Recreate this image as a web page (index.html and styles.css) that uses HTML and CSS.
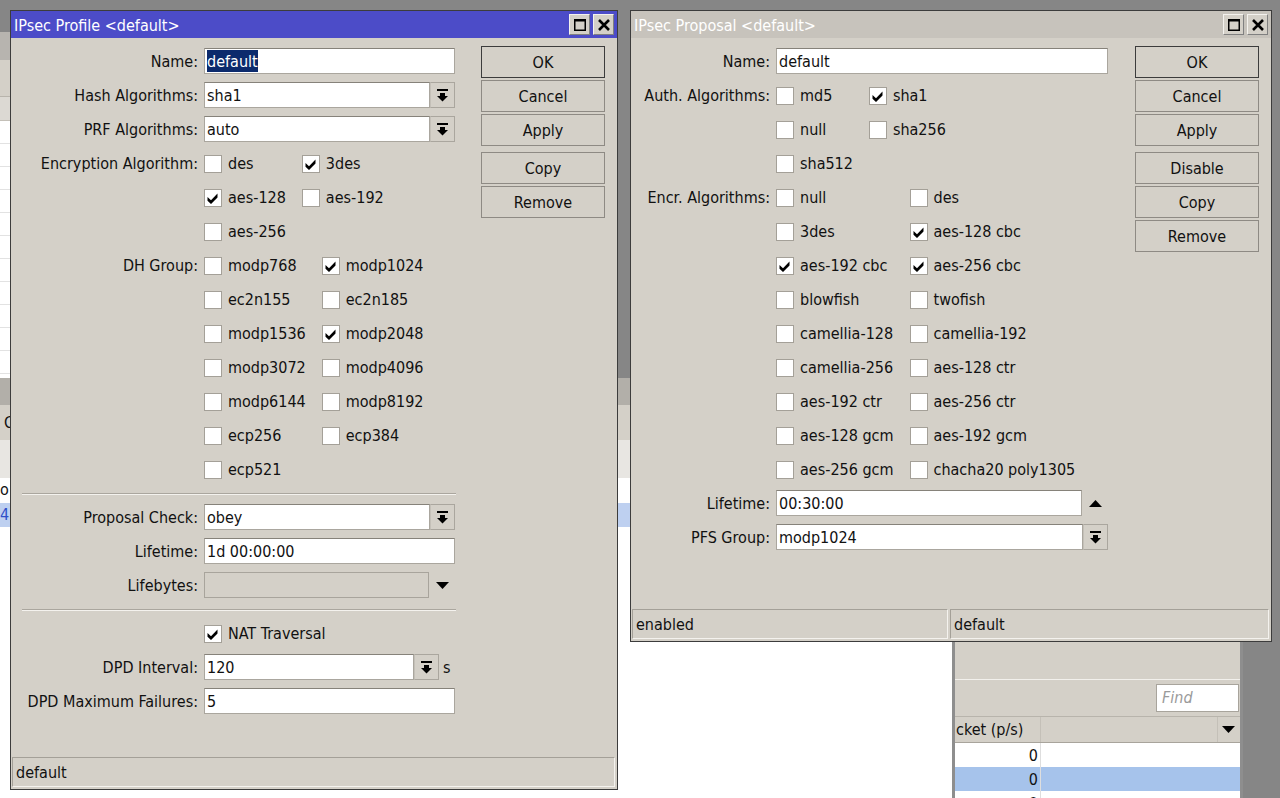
FILE: index.html
```html
<!DOCTYPE html>
<html lang="en">
<head>
  <meta charset="UTF-8">
  <meta name="viewport" content="width=device-width, initial-scale=1.0">
  <title>IPsec Profile / Proposal</title>
  <link rel="stylesheet" href="styles.css">
</head>
<body>
  <svg class="defs" width="0" height="0" aria-hidden="true">
    <symbol id="tick" viewBox="0 0 16 16">
      <path d="M2.5 7 L6 10.2 L12.5 3.5 L12.5 7.6 L6 14 L2.5 10.8 Z"/>
    </symbol>
    <symbol id="drop" viewBox="0 0 11 13">
      <rect x="0" y="0" width="11" height="2"/>
      <rect x="3" y="4" width="5" height="3"/>
      <polygon points="0,7 11,7 5.5,12.5"/>
    </symbol>
    <symbol id="down" viewBox="0 0 13 7">
      <polygon points="0,0 13,0 6.5,7"/>
    </symbol>
    <symbol id="up" viewBox="0 0 13 7">
      <polygon points="0,7 13,7 6.5,0"/>
    </symbol>
    <symbol id="max" viewBox="0 0 14 14">
      <path d="M1 1 H13 V13 H1 Z M2.5 3.5 V11.5 H11.5 V3.5 Z" fill-rule="evenodd"/>
    </symbol>
    <symbol id="close" viewBox="0 0 14 14">
      <path d="M2 2 L12 12 M12 2 L2 12" stroke="#000" stroke-width="2.6" fill="none"/>
    </symbol>
  </svg>

  <div class="desktop">
    <!-- windows behind the dialogs -->
    <div class="bg-win bg-win-a">
      <div class="bg-title"></div>
      <div class="bg-tools"></div>
      <div class="bg-head"></div>
      <div class="bg-rows"></div>
    </div>

    <div class="bg-win bg-win-b">
      <div class="bg-title"></div>
      <div class="bg-tools"><span class="cut-text">C</span></div>
      <div class="bg-head"></div>
      <div class="bg-row"><span class="cut-text">o</span></div>
      <div class="bg-row selected"><span class="cut-text">4</span></div>
    </div>

    <div class="bg-win bg-win-c">
      <div class="c-top"></div>
      <div class="c-tools">
        <div class="find">Find</div>
      </div>
      <div class="c-head">
        <div class="c-cell c-col1">cket (p/s)</div>
        <div class="c-cell c-col2"></div>
        <div class="c-cell c-menu"><svg class="tri"><use href="#down"/></svg></div>
      </div>
      <div class="c-row"><div class="c-cell c-col1 num">0</div><div class="c-cell c-col2"></div></div>
      <div class="c-row selected"><div class="c-cell c-col1 num">0</div><div class="c-cell c-col2"></div></div>
      <div class="c-row"><div class="c-cell c-col1 num">0</div><div class="c-cell c-col2"></div></div>
    </div>

    <!-- IPsec Profile -->
    <div class="window win-profile">
      <div class="titlebar">
        <div class="title">IPsec Profile &lt;default&gt;</div>
        <div class="title-btn"><svg class="ico-max"><use href="#max"/></svg></div>
        <div class="title-btn"><svg class="ico-close"><use href="#close"/></svg></div>
      </div>

      <div class="win-body">
        <div class="form">
          <div class="row">
            <div class="label">Name:</div>
            <div class="field"><div class="input"><span class="sel">default</span></div></div>
          </div>
          <div class="row">
            <div class="label">Hash Algorithms:</div>
            <div class="field combo">
              <div class="input">sha1</div>
              <div class="drop-btn"><svg class="ico-drop"><use href="#drop"/></svg></div>
            </div>
          </div>
          <div class="row">
            <div class="label">PRF Algorithms:</div>
            <div class="field combo">
              <div class="input">auto</div>
              <div class="drop-btn"><svg class="ico-drop"><use href="#drop"/></svg></div>
            </div>
          </div>
          <div class="row">
            <div class="label">Encryption Algorithm:</div>
            <div class="checks">
              <div class="check"><span class="box"></span>des</div>
              <div class="check"><span class="box"><svg class="tick"><use href="#tick"/></svg></span>3des</div>
              <div class="check"><span class="box"><svg class="tick"><use href="#tick"/></svg></span>aes-128</div>
              <div class="check"><span class="box"></span>aes-192</div>
              <div class="check"><span class="box"></span>aes-256</div>
            </div>
          </div>
          <div class="row">
            <div class="label">DH Group:</div>
            <div class="checks">
              <div class="check"><span class="box"></span>modp768</div>
              <div class="check"><span class="box"><svg class="tick"><use href="#tick"/></svg></span>modp1024</div>
              <div class="check"><span class="box"></span>ec2n155</div>
              <div class="check"><span class="box"></span>ec2n185</div>
              <div class="check"><span class="box"></span>modp1536</div>
              <div class="check"><span class="box"><svg class="tick"><use href="#tick"/></svg></span>modp2048</div>
              <div class="check"><span class="box"></span>modp3072</div>
              <div class="check"><span class="box"></span>modp4096</div>
              <div class="check"><span class="box"></span>modp6144</div>
              <div class="check"><span class="box"></span>modp8192</div>
              <div class="check"><span class="box"></span>ecp256</div>
              <div class="check"><span class="box"></span>ecp384</div>
              <div class="check"><span class="box"></span>ecp521</div>
            </div>
          </div>

          <div class="sep"></div>

          <div class="row">
            <div class="label">Proposal Check:</div>
            <div class="field combo">
              <div class="input">obey</div>
              <div class="drop-btn"><svg class="ico-drop"><use href="#drop"/></svg></div>
            </div>
          </div>
          <div class="row">
            <div class="label">Lifetime:</div>
            <div class="field"><div class="input">1d 00:00:00</div></div>
          </div>
          <div class="row">
            <div class="label">Lifebytes:</div>
            <div class="field combo">
              <div class="input disabled"></div>
              <div class="arrow"><svg class="tri"><use href="#down"/></svg></div>
            </div>
          </div>

          <div class="sep"></div>

          <div class="row">
            <div class="label"></div>
            <div class="check"><span class="box"><svg class="tick"><use href="#tick"/></svg></span>NAT Traversal</div>
          </div>
          <div class="row">
            <div class="label">DPD Interval:</div>
            <div class="field combo">
              <div class="input">120</div>
              <div class="drop-btn"><svg class="ico-drop"><use href="#drop"/></svg></div>
              <div class="unit">s</div>
            </div>
          </div>
          <div class="row">
            <div class="label">DPD Maximum Failures:</div>
            <div class="field"><div class="input">5</div></div>
          </div>
        </div>

        <div class="buttons">
          <button class="btn btn-default">OK</button>
          <button class="btn">Cancel</button>
          <button class="btn">Apply</button>
          <button class="btn btn-gap">Copy</button>
          <button class="btn">Remove</button>
        </div>
      </div>

      <div class="statusbar">
        <div class="status-cell">default</div>
      </div>
    </div>

    <!-- IPsec Proposal -->
    <div class="window win-proposal">
      <div class="titlebar inactive">
        <div class="title">IPsec Proposal &lt;default&gt;</div>
        <div class="title-btn"><svg class="ico-max"><use href="#max"/></svg></div>
        <div class="title-btn"><svg class="ico-close"><use href="#close"/></svg></div>
      </div>

      <div class="win-body">
        <div class="form">
          <div class="row">
            <div class="label">Name:</div>
            <div class="field"><div class="input">default</div></div>
          </div>
          <div class="row">
            <div class="label">Auth. Algorithms:</div>
            <div class="checks">
              <div class="check"><span class="box"></span>md5</div>
              <div class="check"><span class="box"><svg class="tick"><use href="#tick"/></svg></span>sha1</div>
              <div class="check"><span class="box"></span>null</div>
              <div class="check"><span class="box"></span>sha256</div>
              <div class="check"><span class="box"></span>sha512</div>
            </div>
          </div>
          <div class="row">
            <div class="label">Encr. Algorithms:</div>
            <div class="checks">
              <div class="check"><span class="box"></span>null</div>
              <div class="check"><span class="box"></span>des</div>
              <div class="check"><span class="box"></span>3des</div>
              <div class="check"><span class="box"><svg class="tick"><use href="#tick"/></svg></span>aes-128 cbc</div>
              <div class="check"><span class="box"><svg class="tick"><use href="#tick"/></svg></span>aes-192 cbc</div>
              <div class="check"><span class="box"><svg class="tick"><use href="#tick"/></svg></span>aes-256 cbc</div>
              <div class="check"><span class="box"></span>blowfish</div>
              <div class="check"><span class="box"></span>twofish</div>
              <div class="check"><span class="box"></span>camellia-128</div>
              <div class="check"><span class="box"></span>camellia-192</div>
              <div class="check"><span class="box"></span>camellia-256</div>
              <div class="check"><span class="box"></span>aes-128 ctr</div>
              <div class="check"><span class="box"></span>aes-192 ctr</div>
              <div class="check"><span class="box"></span>aes-256 ctr</div>
              <div class="check"><span class="box"></span>aes-128 gcm</div>
              <div class="check"><span class="box"></span>aes-192 gcm</div>
              <div class="check"><span class="box"></span>aes-256 gcm</div>
              <div class="check"><span class="box"></span>chacha20 poly1305</div>
            </div>
          </div>
          <div class="row">
            <div class="label">Lifetime:</div>
            <div class="field combo">
              <div class="input">00:30:00</div>
              <div class="arrow"><svg class="tri"><use href="#up"/></svg></div>
            </div>
          </div>
          <div class="row">
            <div class="label">PFS Group:</div>
            <div class="field combo">
              <div class="input">modp1024</div>
              <div class="drop-btn"><svg class="ico-drop"><use href="#drop"/></svg></div>
            </div>
          </div>
        </div>

        <div class="buttons">
          <button class="btn btn-default">OK</button>
          <button class="btn">Cancel</button>
          <button class="btn">Apply</button>
          <button class="btn btn-gap">Disable</button>
          <button class="btn">Copy</button>
          <button class="btn">Remove</button>
        </div>
      </div>

      <div class="statusbar">
        <div class="status-cell status-first">enabled</div>
        <div class="status-cell">default</div>
      </div>
    </div>
  </div>
</body>
</html>
```

FILE: styles.css
```css
* {
  box-sizing: border-box;
}

body {
  margin: 0;
  width: 1280px;
  height: 798px;
  overflow: hidden;
  background-color: #868686;
  font-family: "DejaVu Sans Condensed", "DejaVu Sans", sans-serif;
  font-size: 16px;
  color: #111;
}

.defs {
  position: absolute;
  width: 0;
  height: 0;
}

.desktop {
  position: relative;
  width: 1280px;
  height: 798px;
  overflow: hidden;
}

/* background windows */

.bg-win {
  position: absolute;
  display: flex;
  flex-direction: column;
  overflow: hidden;
}

.bg-win-a {
  left: 0;
  top: 32px;
  width: 300px;
  height: 346px;
  background-color: #fff;
}

.bg-win-a .bg-title {
  height: 28px;
  background-color: #b7b4af;
}

.bg-win-a .bg-tools {
  height: 37px;
  background-color: #d4d0c8;
  border-bottom: 1px solid #b8b4ac;
}

.bg-win-a .bg-head {
  height: 24px;
  background-color: #dcd9d3;
  border-bottom: 1px solid #c4c0b8;
}

.bg-win-a .bg-rows {
  flex: 1;
  background: repeating-linear-gradient(#fff 0, #fff 22px, #e2e2e2 22px, #e2e2e2 23px);
}

.bg-win-b {
  left: 0;
  top: 378px;
  width: 955px;
  height: 420px;
  background-color: #fff;
}

.bg-win-b .bg-title {
  height: 27px;
  background-color: #b2afa9;
}

.bg-win-b .bg-tools {
  height: 35px;
  padding-left: 4px;
  line-height: 35px;
  background-color: #d4d0c8;
}

.bg-win-b .bg-head {
  height: 38px;
  background-color: #e8e6e2;
}

.bg-row {
  height: 24px;
  line-height: 24px;
  background-color: #fff;
}

.bg-row.selected {
  margin-top: 1px;
  background-color: #bed0f0;
  color: #2f4fc8;
}

.cut-text {
  display: block;
  width: 10px;
  overflow: hidden;
}

.bg-win-c {
  left: 952px;
  top: 600px;
  width: 291px;
  height: 220px;
  background-color: #d4d0c8;
  border-left: 3px solid #8e8e8e;
  border-right: 3px solid #8e8e8e;
}

.c-top {
  height: 80px;
  border-bottom: 1px solid #f2f0ec;
}

.c-tools {
  display: flex;
  justify-content: flex-end;
  align-items: center;
  height: 36px;
  padding-right: 1px;
}

.find {
  width: 83px;
  height: 28px;
  padding-left: 5px;
  line-height: 26px;
  background-color: #fff;
  border: 1px solid #a8a49c;
  color: #9a9a9a;
  font-style: italic;
}

.c-head {
  display: flex;
  height: 27px;
  border-top: 1px solid #b8b4ac;
  border-bottom: 1px solid #a8a49c;
}

.c-cell {
  height: 100%;
  padding: 0 2px 0 1px;
  line-height: 25px;
  white-space: nowrap;
  overflow: hidden;
}

.c-col1 {
  width: 86px;
  border-right: 1px solid #c4c0b8;
}

.c-col2 {
  flex: 1;
}

.c-menu {
  display: flex;
  align-items: center;
  justify-content: center;
  width: 23px;
  border-left: 1px solid #c4c0b8;
}

.c-row {
  display: flex;
  height: 24px;
  background-color: #fff;
}

.c-row.selected {
  background-color: #a6c3eb;
}

.c-row .c-col1 {
  border-right-color: #dedede;
}

.num {
  text-align: right;
}

/* dialog windows */

.window {
  position: absolute;
  display: flex;
  flex-direction: column;
  background-color: #d4d0c8;
  border: 1px solid #3c3c3c;
}

.win-profile {
  left: 10px;
  top: 10px;
  width: 608px;
  height: 780px;
}

.win-proposal {
  left: 630px;
  top: 10px;
  width: 642px;
  height: 632px;
}

.titlebar {
  display: flex;
  align-items: center;
  height: 27px;
  padding: 0 3px;
  color: #fff;
  background-color: #4c4cc8;
}

.titlebar.inactive {
  background-color: #c7c3bc;
}

.title {
  flex: 1;
  padding-top: 1px;
  white-space: nowrap;
}

.title-btn {
  display: flex;
  align-items: center;
  justify-content: center;
  width: 21px;
  height: 21px;
  margin-left: 3px;
  background-color: #d4d0c8;
  border: 1px solid;
  border-color: #f4f2ee #808080 #808080 #f4f2ee;
}

.ico-max,
.ico-close {
  width: 14px;
  height: 14px;
}

.win-body {
  display: flex;
  flex: 1;
}

.form {
  display: flex;
  flex: 1;
  flex-direction: column;
  gap: 8px;
  padding-top: 10px;
}

.row {
  display: flex;
  align-items: flex-start;
}

.label {
  flex-shrink: 0;
  height: 26px;
  margin-right: 6px;
  padding-top: 2px;
  line-height: 24px;
  text-align: right;
  white-space: nowrap;
}

.win-profile .label {
  width: 187px;
}

.win-proposal .label {
  width: 139px;
}

.win-profile .field {
  width: 251px;
}

.win-proposal .field {
  width: 332px;
}

.combo {
  display: flex;
}

.input {
  display: flex;
  align-items: center;
  height: 26px;
  padding: 1px 2px 0;
  background-color: #fff;
  border: 1px solid #aaa69e;
  border-top-color: #86827a;
  white-space: nowrap;
}

.combo .input {
  flex: 1;
}

.input.disabled {
  background-color: #d4d0c8;
  border-color: #a8a49c;
}

.sel {
  height: 22px;
  margin-top: -1px;
  padding-top: 1px;
  line-height: 21px;
  background-color: #0c2a6c;
  color: #fff;
}

.drop-btn {
  display: flex;
  align-items: center;
  justify-content: center;
  width: 25px;
  height: 26px;
  background-color: #d4d0c8;
  border: 1px solid #aaa69e;
  border-left-color: #c4c0b8;
}

.ico-drop {
  width: 11px;
  height: 13px;
}

.arrow {
  display: flex;
  align-items: center;
  justify-content: center;
  width: 26px;
  height: 26px;
}

.tri {
  width: 13px;
  height: 7px;
}

.unit {
  width: 12px;
  margin-left: 4px;
  padding-top: 2px;
  line-height: 24px;
}

.checks {
  display: grid;
  grid-template-columns: auto auto;
  justify-content: start;
  column-gap: 16px;
  row-gap: 8px;
}

.check {
  display: flex;
  align-items: center;
  gap: 6px;
  height: 26px;
  padding-top: 1px;
  white-space: nowrap;
}

.box {
  display: flex;
  align-items: center;
  justify-content: center;
  width: 18px;
  height: 18px;
  background-color: #fff;
  border: 1px solid #a4a098;
}

.tick {
  width: 16px;
  height: 16px;
}

.sep {
  width: 434px;
  height: 2px;
  margin: 3px 0 1px 11px;
  border-top: 1px solid #aaa69e;
  border-bottom: 1px solid #f4f2ee;
}

.buttons {
  display: flex;
  flex-direction: column;
  gap: 2px;
  width: 124px;
  margin-right: 12px;
  padding-top: 8px;
}

.btn {
  display: flex;
  align-items: center;
  justify-content: center;
  height: 32px;
  padding: 1px 0 0;
  font: inherit;
  color: #111;
  background-color: #d4d0c8;
  border: 1px solid #8e8a84;
}

.btn-default {
  border-color: #3c3c3c;
}

.btn-gap {
  margin-top: 4px;
}

.statusbar {
  display: flex;
  gap: 2px;
  height: 30px;
  margin: 0 2px 2px 1px;
}

.status-cell {
  flex: 1;
  padding: 1px 3px 0;
  line-height: 27px;
  border: 1px solid;
  border-color: #a4a098 #f4f2ee #f4f2ee #a4a098;
  white-space: nowrap;
}

.status-first {
  flex: 0 0 316px;
}
```
